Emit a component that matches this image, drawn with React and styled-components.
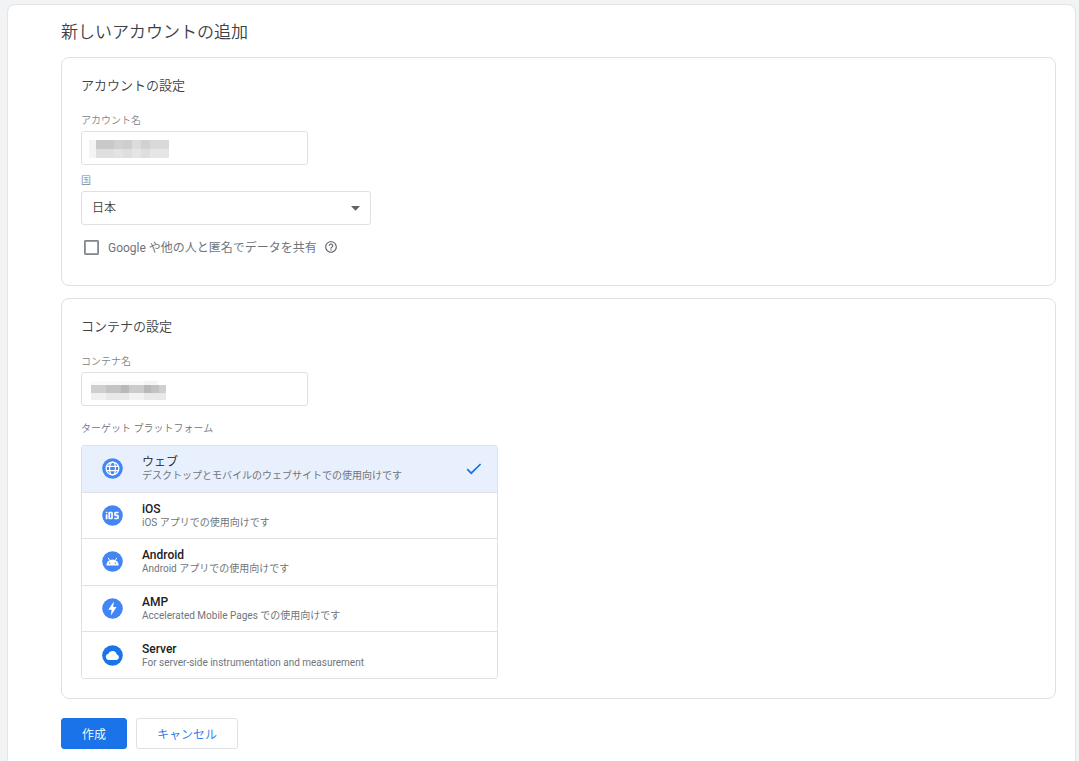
import React, { useState } from "react";
import styled, { createGlobalStyle } from "styled-components";

const GlobalStyle = createGlobalStyle`
  * {
    box-sizing: border-box;
  }

  body {
    margin: 0;
    background: #f1f3f4;
    color: #3c4043;
    font-family: Roboto, "Noto Sans CJK JP", sans-serif;
    font-weight: 350;
  }

  button,
  input,
  select {
    font-family: inherit;
    font-weight: inherit;
  }
`;

const Sheet = styled.main`
  min-height: 100vh;
  margin: 4px 3px 0 7px;
  padding: 16px 19px 12px 53px;
  background: #ffffff;
  border: 1px solid #e3e5e8;
  border-bottom: 0;
  border-radius: 8px 8px 0 0;
`;

const PageTitle = styled.h1`
  margin: 0 0 14px;
  font-size: 17px;
  font-weight: 350;
  line-height: 22px;
`;

const Card = styled.section`
  margin-bottom: 12px;
  padding: 18px 19px 19px;
  border: 1px solid #dfe1e5;
  border-radius: 8px;
`;

const CardTitle = styled.h2`
  margin: 0 0 19px;
  font-size: 13px;
  font-weight: 350;
  line-height: 20px;
`;

const Field = styled.div`
  display: flex;
  flex-direction: column;
  margin-bottom: ${(props) => props.$gap || 10}px;
`;

const Label = styled.label`
  margin-bottom: 4px;
  color: #80868b;
  font-size: 10px;
  line-height: 12px;
`;

const InputWrap = styled.div`
  position: relative;
  width: 227px;
`;

const TextInput = styled.input`
  display: block;
  width: 100%;
  height: 34px;
  padding: 0 10px;
  background: #ffffff;
  border: 1px solid #dfe1e5;
  border-radius: 3px;
  font-size: 12px;
`;

const Mosaic = styled.svg`
  position: absolute;
  top: 8px;
  left: 8px;
`;

const SelectWrap = styled.div`
  position: relative;
  width: 290px;
`;

const Select = styled.select`
  display: block;
  width: 100%;
  height: 34px;
  padding: 0 10px;
  appearance: none;
  background: #ffffff;
  border: 1px solid #dfe1e5;
  border-radius: 3px;
  color: #3c4043;
  font-size: 12px;
`;

const Arrow = styled.svg`
  position: absolute;
  top: 15px;
  right: 11px;
  pointer-events: none;
`;

const ShareRow = styled.div`
  display: flex;
  align-items: center;
  height: 18px;
  margin: 13px 0 10px 3px;
`;

const Checkbox = styled.input`
  width: 15px;
  height: 15px;
  margin: 0;
  appearance: none;
  background: #ffffff;
  border: 1px solid #80868b;
  outline: 1px solid #9aa0a6;
  outline-offset: -2px;
  border-radius: 1px;
`;

const ShareLabel = styled.label`
  margin: 0 7px 0 9px;
  padding-top: 2px;
  color: #70757a;
  font-size: 12px;
  font-weight: 400;
  line-height: 16px;
`;

const PlatformTitle = styled.h3`
  margin: 0 0 10px;
  color: #70757a;
  font-size: 10px;
  font-weight: 350;
  line-height: 12px;
`;

const PlatformList = styled.div`
  display: flex;
  flex-direction: column;
  width: 417px;
  max-width: 100%;
  min-height: 234px;
  overflow: hidden;
  border: 1px solid #dfe1e5;
  border-radius: 3px;
`;

const Platform = styled.button`
  display: flex;
  flex: 1;
  align-items: center;
  width: 100%;
  padding: 0 15px 0 20px;
  background: ${(props) => (props.$active ? "#e8f0fe" : "#ffffff")};
  border: 0;
  border-bottom: 1px solid #dfe1e5;
  text-align: left;

  &:last-child {
    border-bottom: 0;
  }
`;

const PlatformText = styled.span`
  display: flex;
  flex: 1;
  flex-direction: column;
  margin-left: 19px;
`;

const PlatformName = styled.span`
  color: #202124;
  font-size: 12px;
  font-weight: ${(props) => (props.$plain ? 350 : 500)};
  line-height: 14px;
`;

const PlatformHint = styled.span`
  color: #70757a;
  font-size: 10px;
  font-weight: 400;
  line-height: 13px;
`;

const Actions = styled.div`
  display: flex;
  gap: 9px;
  margin-top: 19px;
`;

const ActionButton = styled.button`
  height: 31px;
  padding: 0 20px;
  background: ${(props) => (props.$primary ? "#1a73e8" : "#ffffff")};
  border: 1px solid ${(props) => (props.$primary ? "#1a73e8" : "#dfe1e5")};
  border-radius: 3px;
  color: ${(props) => (props.$primary ? "#ffffff" : "#1a73e8")};
  font-size: 12px;
`;

const WebIcon = () => (
  <svg width="21" height="21" viewBox="0 0 21 21" fill="none" stroke="#fff">
    <circle cx="10.5" cy="10.5" r="10.3" fill="#4285f4" stroke="none" />
    <circle cx="10.5" cy="10.5" r="6.4" strokeWidth="1.3" />
    <ellipse cx="10.5" cy="10.5" rx="2.9" ry="6.4" strokeWidth="1.2" />
    <path d="M4.6 8.3h11.8M4.6 12.7h11.8" strokeWidth="1.2" />
  </svg>
);

const IosIcon = () => (
  <svg width="21" height="21" viewBox="0 0 21 21" fill="none" stroke="#fff">
    <circle cx="10.5" cy="10.5" r="10.3" fill="#4285f4" stroke="none" />
    <path d="M4.6 9.2v5M4.6 6.7v1.4" strokeWidth="1.7" />
    <rect x="7.2" y="7.5" width="2.8" height="6" rx="0.6" strokeWidth="1.7" />
    <path
      d="M16.6 7.5h-3a.6.6 0 0 0-.6.6v1.6c0 .4.3.7.7.7h1.6c.4 0 .7.3.7.7v1.8a.6.6 0 0 1-.6.6h-3.1"
      strokeWidth="1.7"
    />
  </svg>
);

const AndroidIcon = () => (
  <svg width="21" height="21" viewBox="0 0 21 21">
    <circle cx="10.5" cy="10.5" r="10.3" fill="#4285f4" />
    <path d="M4.3 14.6a6.2 6 0 0 1 12.4 0z" fill="#fff" />
    <path d="M6.2 6.8l1.6 2.8M14.8 6.8l-1.6 2.8" stroke="#fff" strokeWidth="1" />
    <circle cx="7.7" cy="12.2" r="0.7" fill="#4285f4" />
    <circle cx="13.3" cy="12.2" r="0.7" fill="#4285f4" />
  </svg>
);

const AmpIcon = () => (
  <svg width="21" height="21" viewBox="0 0 21 21">
    <circle cx="10.5" cy="10.5" r="10.3" fill="#4285f4" />
    <path d="M11.8 3.6L6.3 11.8h3.3l-.7 5.8 5.7-8.6h-3.4z" fill="#fff" />
  </svg>
);

const ServerIcon = () => (
  <svg width="21" height="21" viewBox="0 0 21 21">
    <circle cx="10.5" cy="10.5" r="10.3" fill="#1a73e8" />
    <path
      d="M6.8 15a3.2 3.2 0 0 1-.5-6.3 4.5 4.5 0 0 1 8.5.8 2.8 2.8 0 0 1-.2 5.5z"
      fill="#fff"
    />
  </svg>
);

const platforms = [
  {
    id: "web",
    name: "ウェブ",
    hint: "デスクトップとモバイルのウェブサイトでの使用向けです",
    icon: <WebIcon />,
    plain: true,
  },
  { id: "ios", name: "iOS", hint: "iOS アプリでの使用向けです", icon: <IosIcon /> },
  {
    id: "android",
    name: "Android",
    hint: "Android アプリでの使用向けです",
    icon: <AndroidIcon />,
  },
  {
    id: "amp",
    name: "AMP",
    hint: "Accelerated Mobile Pages での使用向けです",
    icon: <AmpIcon />,
  },
  {
    id: "server",
    name: "Server",
    hint: "For server-side instrumentation and measurement",
    icon: <ServerIcon />,
  },
];

// x, y, width, height, fill
const accountBlocks = [
  [0, 1, 7, 9, "#f3f3f3"],
  [7, 1, 18, 9, "#c9c9c9"],
  [25, 1, 9, 9, "#d1d1d1"],
  [34, 1, 9, 9, "#cecece"],
  [43, 1, 9, 9, "#dcdcdc"],
  [52, 1, 9, 9, "#d1d1d1"],
  [61, 1, 19, 9, "#d9d9d9"],
  [0, 10, 7, 9, "#f4f4f4"],
  [7, 10, 18, 9, "#dfdfdf"],
  [25, 10, 9, 9, "#e3e3e3"],
  [34, 10, 9, 9, "#dedede"],
  [43, 10, 9, 9, "#e5e5e5"],
  [52, 10, 9, 9, "#dedede"],
  [61, 10, 19, 9, "#e6e6e6"],
];

const containerBlocks = [
  [2, 1, 52, 4, "#fafafa"],
  [54, 1, 15, 4, "#f5f5f5"],
  [2, 5, 15, 8, "#cfcfcf"],
  [17, 5, 15, 8, "#c4c4c4"],
  [32, 5, 8, 8, "#b9b9b9"],
  [40, 5, 15, 8, "#cbcbcb"],
  [55, 5, 7, 8, "#b9b9b9"],
  [62, 5, 8, 8, "#c2c2c2"],
  [70, 5, 7, 8, "#cfcfcf"],
  [2, 13, 15, 7, "#f0f0f0"],
  [17, 13, 23, 7, "#e8e8e8"],
  [40, 13, 15, 7, "#f2f2f2"],
  [55, 13, 22, 7, "#e9e9e9"],
];

const Redacted = ({ blocks }) => (
  <Mosaic width="84" height="20" aria-hidden="true">
    {blocks.map(([x, y, w, h, fill]) => (
      <rect key={`${x}-${y}`} x={x} y={y} width={w} height={h} fill={fill} />
    ))}
  </Mosaic>
);

const App = () => {
  const [active, setActive] = useState("web");

  return (
    <>
      <GlobalStyle />
      <Sheet>
        <PageTitle>新しいアカウントの追加</PageTitle>

        <Card>
          <CardTitle>アカウントの設定</CardTitle>
          <Field>
            <Label htmlFor="account">アカウント名</Label>
            <InputWrap>
              <TextInput id="account" type="text" />
              <Redacted blocks={accountBlocks} />
            </InputWrap>
          </Field>
          <Field>
            <Label htmlFor="country">国</Label>
            <SelectWrap>
              <Select id="country">
                <option>日本</option>
              </Select>
              <Arrow width="9" height="5" viewBox="0 0 9 5">
                <path d="M0 0h9L4.5 4.7z" fill="#5f6368" />
              </Arrow>
            </SelectWrap>
          </Field>
          <ShareRow>
            <Checkbox id="share" type="checkbox" />
            <ShareLabel htmlFor="share">
              Google や他の人と匿名でデータを共有
            </ShareLabel>
            <svg width="14" height="14" viewBox="0 0 24 24" fill="#5f6368">
              <path d="M11 18h2v-2h-2v2zm1-16C6.48 2 2 6.48 2 12s4.48 10 10 10 10-4.48 10-10S17.52 2 12 2zm0 18c-4.41 0-8-3.59-8-8s3.59-8 8-8 8 3.59 8 8-3.59 8-8 8zm0-14c-2.21 0-4 1.79-4 4h2c0-1.1.9-2 2-2s2 .9 2 2c0 2-3 1.75-3 5h2c0-2.25 3-2.5 3-5 0-2.21-1.79-4-4-4z" />
            </svg>
          </ShareRow>
        </Card>

        <Card>
          <CardTitle>コンテナの設定</CardTitle>
          <Field $gap={17}>
            <Label htmlFor="container">コンテナ名</Label>
            <InputWrap>
              <TextInput id="container" type="text" />
              <Redacted blocks={containerBlocks} />
            </InputWrap>
          </Field>
          <PlatformTitle>ターゲット プラットフォーム</PlatformTitle>
          <PlatformList>
            {platforms.map((item) => (
              <Platform
                key={item.id}
                type="button"
                $active={item.id === active}
                onClick={() => setActive(item.id)}
              >
                {item.icon}
                <PlatformText>
                  <PlatformName $plain={item.plain}>{item.name}</PlatformName>
                  <PlatformHint>{item.hint}</PlatformHint>
                </PlatformText>
                {item.id === active && (
                  <svg width="16" height="12" viewBox="0 0 16 12" fill="none">
                    <path d="M1.2 6.2l4 4L14.6 1" stroke="#1a73e8" strokeWidth="1.7" />
                  </svg>
                )}
              </Platform>
            ))}
          </PlatformList>
        </Card>

        <Actions>
          <ActionButton type="button" $primary>
            作成
          </ActionButton>
          <ActionButton type="button">キャンセル</ActionButton>
        </Actions>
      </Sheet>
    </>
  );
};

export default App;
